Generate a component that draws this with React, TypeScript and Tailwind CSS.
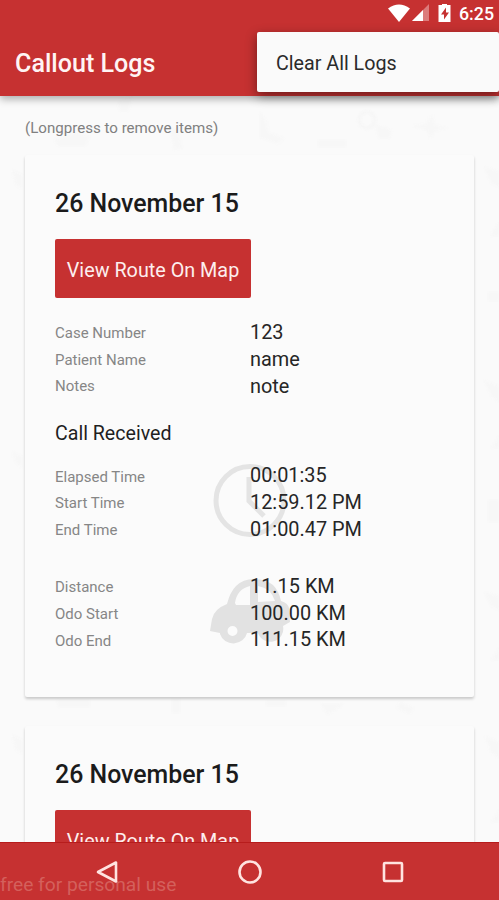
import React from "react";

type Row = { label: string; value: string };

const caseRows: Row[] = [
  { label: "Case Number", value: "123" },
  { label: "Patient Name", value: "name" },
  { label: "Notes", value: "note" },
];

const timeRows: Row[] = [
  { label: "Elapsed Time", value: "00:01:35" },
  { label: "Start Time", value: "12:59.12 PM" },
  { label: "End Time", value: "01:00.47 PM" },
];

const distanceRows: Row[] = [
  { label: "Distance", value: "11.15 KM" },
  { label: "Odo Start", value: "100.00 KM" },
  { label: "Odo End", value: "111.15 KM" },
];

function Rows({ rows, shifted }: { rows: Row[]; shifted?: boolean }) {
  return (
    <div className="relative">
      {rows.map((row) => (
        <div key={row.label} className="grid h-[26.75px] grid-cols-[195px_1fr] items-center">
          <span className={`text-[15px] leading-[22px] text-[#868686] ${shifted ? "pt-[2px]" : ""}`}>{row.label}</span>
          <span className="pt-px text-[19.9px] leading-[24px] text-[#262626]">{row.value}</span>
        </div>
      ))}
    </div>
  );
}

function ClockIcon() {
  return (
    <svg className="absolute left-[158px] top-[1px]" width="76" height="76" viewBox="0 0 76 76" fill="none" stroke="#e4e4e4">
      <circle cx="37" cy="37.5" r="34" strokeWidth="5" />
      <path d="M36 14v24l15 15" strokeWidth="5" />
    </svg>
  );
}

function CarIcon() {
  return (
    <svg className="absolute left-[155px] top-[3px]" width="84" height="72" viewBox="0 0 84 72">
      <path
        fill="#e2e2e2"
        fillRule="evenodd"
        d="M0 55L2 43Q4 33 17 28Q20 16 26 10Q33 3 44 3Q56 3 63 9Q69 15 71 25Q78 27 79 32L80 46L73 50A13 13 0 0 1 48 57L37 57A14 13.500 0 0 1 10 58V57ZM26 29H40V10Q27 13 25 27ZM48 10V26L65 25Q61 12 48 10ZM22.500 50a5 5 0 1 0 0 10a5 5 0 1 0 0-10Z"
      />
    </svg>
  );
}

function LogCard() {
  return (
    <div className="h-[542px] shrink-0 rounded-[2px] bg-[#fbfbfb] px-[30px] pt-[30px] shadow-[0_2px_3px_rgba(0,0,0,0.2)]">
      <h2 className="h-[38px] text-[24.9px] font-medium leading-[38px] text-[#1b1b1b]">26 November 15</h2>
      <button className="mt-[16px] block h-[59px] w-[196px] rounded-[2px] bg-[#c63131] text-[19.8px] leading-[63px] text-[#fdeeee] whitespace-nowrap">
        View Route On Map
      </button>
      <div className="mt-[21.5px]">
        <Rows rows={caseRows} />
      </div>
      <h3 className="mt-[20px] h-[26px] text-[19.6px] leading-[28px] text-[#1f1f1f]">Call Received</h3>
      <div className="relative mt-[16.5px]">
        <ClockIcon />
        <Rows rows={timeRows} shifted />
      </div>
      <div className="relative mt-[30.5px]">
        <CarIcon />
        <Rows rows={distanceRows} shifted />
      </div>
    </div>
  );
}

// faint medical doodles behind the list
function Doodles() {
  return (
    <svg className="absolute inset-0 blur-[1px]" width="499" height="746" viewBox="0 96 499 746" fill="#f7f7f7">
      <path d="M260 112q8 10 8 20l16 6-6 6-18-6zM318 140h28v7h-28zM118 100l14-3-3 14h-10zM170 130l8-2 4 20-8 2zM54 140l22-8 14 4-4 10H58z" />
      <path d="M412 126l14-2 6-9 3 10 14 3-14 3-4 7-5-8z" />
      <circle cx="367" cy="120" r="8" fill="none" stroke="#f6f6f6" strokeWidth="3" />
      <path d="M375 124l17 6-2 8h-12zM12 170l10 5v14l-6-4zM12 452l10 4v12l-6-5zM12 735l10 5v14l-6-4z" />
      <path d="M484 167l15 4v16l-8-4zM490 236l9-14v14zM488 292h11v9h-11zM484 380l15 6v16l-8-6zM491 448l8-12v12zM488 500h11v22h-11zM484 592l15 4v14l-8-4zM491 660l8-12v12zM485 736l14 6v16l-8-6zM491 822l8-12v12z" />
      <path d="M56 700h34v7H58zM172 699h8v14h-8zM266 701h20v5h-20zM320 704h24l-16 11zM400 702l14 6-4 6-14-6z" />
    </svg>
  );
}

export default function App() {
  return (
    <div className="relative flex h-[900px] w-[499px] flex-col overflow-hidden bg-[#fafafa] font-[Roboto,sans-serif]">
      <header className="relative z-10 flex h-[96px] shrink-0 flex-col bg-[#c63131] shadow-[0_3px_8px_rgba(0,0,0,0.32)]">
        <div className="flex h-[31px] items-start justify-end gap-[7px] pr-[5px] text-white">
          <svg className="mt-[4px]" width="65" height="18" viewBox="0 0 65 18">
            <path fill="#fff" d="M1 4.500Q12-3.500 23 4.500L12 18Z" />
            <path fill="#dc7b7b" d="M42 0V17H25Z" />
            <path fill="#fff" d="M36 6V17H25Z" />
            <path fill="#fff" d="M55 1V0h5v1h3.500v17H51.500V1Z" />
            <path fill="#c63131" d="M59 3.500l-5 7h3v5l5-7h-3Z" />
          </svg>
          <span className="text-[17.8px] font-medium leading-[28px]">6:25</span>
        </div>
        <h1 className="h-[64px] pl-[15px] text-[25.1px] font-medium leading-[65px] text-[#fff4f4]">Callout Logs</h1>
        <div className="absolute left-[257px] top-[32px] flex h-[60px] w-[242px] items-center rounded-[2px] bg-[#fafafa] pl-[19px] pt-[3px] text-[19.7px] text-[#2b2b2b] shadow-[0_4px_12px_rgba(0,0,0,0.45)]">
          Clear All Logs
        </div>
      </header>

      <main className="relative h-[746px] shrink-0 overflow-hidden">
        <Doodles />
        <div className="relative flex flex-col px-[25px]">
          <p className="h-[59px] shrink-0 text-[15.1px] leading-[64px] text-[#808080]">(Longpress to remove items)</p>
          <div className="flex flex-col gap-[29px]">
            <LogCard />
            <LogCard />
          </div>
        </div>
      </main>

      <nav className="relative h-[58px] shrink-0 border-t border-[#b71c1c] bg-[#c63131]">
        <span className="absolute left-0 top-[29px] whitespace-nowrap text-[19.2px] leading-[26px] text-[#d4605c]">free for personal use</span>
        <div className="relative flex h-[58px] items-center justify-center gap-[117px]">
          <svg width="26" height="26" viewBox="0 0 26 26" fill="none" stroke="#ffe3e0" strokeWidth="2.600" strokeLinejoin="round">
            <path d="M22 3.500V22.500L4 13Z" />
          </svg>
          <svg width="26" height="26" viewBox="0 0 26 26" fill="none" stroke="#ffe3e0" strokeWidth="2.600">
            <circle cx="13" cy="13" r="10.500" />
          </svg>
          <svg width="26" height="26" viewBox="0 0 26 26" fill="none" stroke="#ffe3e0" strokeWidth="2.600">
            <rect x="4" y="4" width="18" height="18" rx="1" />
          </svg>
        </div>
      </nav>
    </div>
  );
}
